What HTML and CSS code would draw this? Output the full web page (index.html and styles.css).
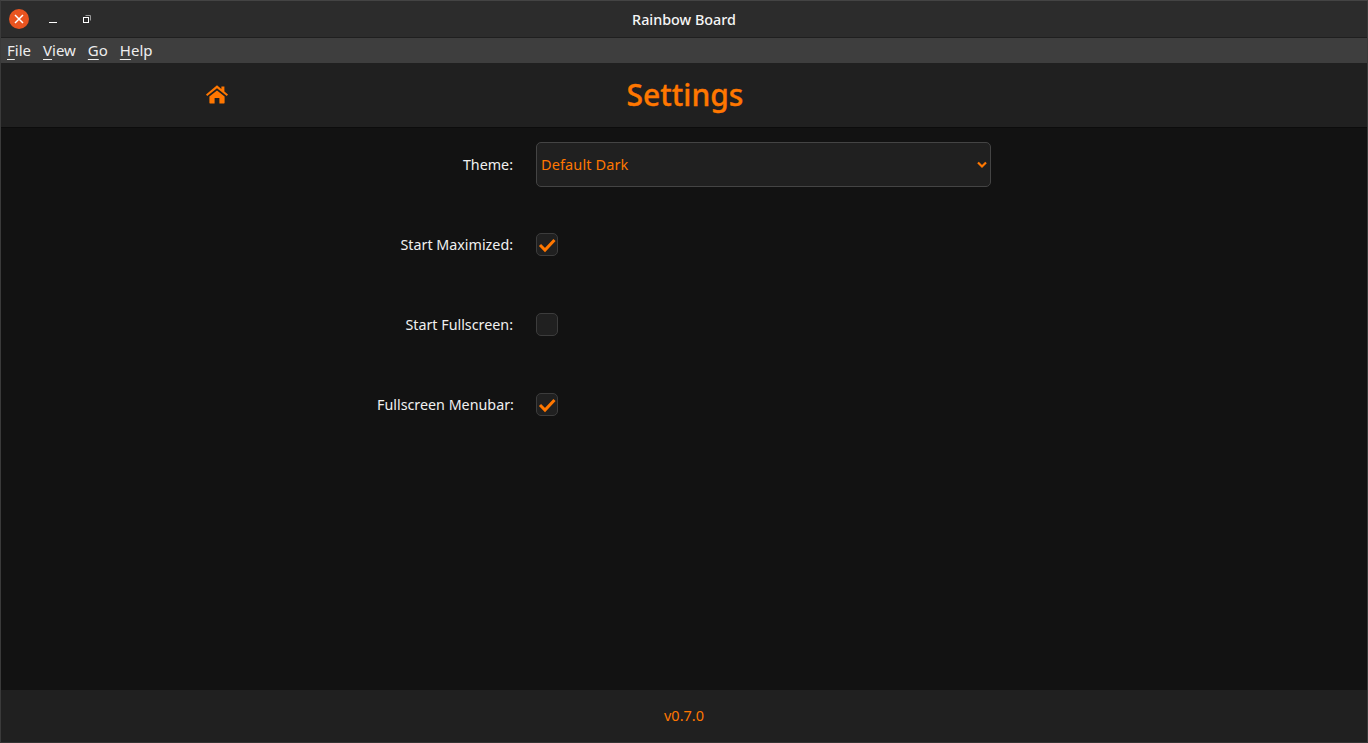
FILE: index.html
```html
<!DOCTYPE html>
<html lang="en">
<head>
<meta charset="utf-8">
<title>Rainbow Board</title>
<link rel="stylesheet" href="styles.css">
</head>
<body>
<div class="window">
  <div class="titlebar">
    <div class="controls">
      <span class="close"><svg width="20" height="20" viewBox="0 0 20 20"><path d="M6 6l8 8M14 6l-8 8" stroke="#fff" stroke-width="1.5" fill="none"/></svg></span>
      <span class="min"><svg width="10" height="10" viewBox="0 0 10 10"><path d="M1 8.5h8" stroke="#fff" fill="none"/></svg></span>
      <span class="max"><svg width="10" height="10" viewBox="0 0 10 10"><rect x="1.5" y="3.5" width="5" height="5" stroke="#fff" fill="none"/><path d="M3.5 1.5h5v5" stroke="#999" fill="none"/></svg></span>
    </div>
    <div class="title">Rainbow Board</div>
  </div>
  <nav class="menubar">
    <span class="menu-item"><u>F</u>ile</span>
    <span class="menu-item"><u>V</u>iew</span>
    <span class="menu-item"><u>G</u>o</span>
    <span class="menu-item"><u>H</u>elp</span>
  </nav>
  <header class="header">
    <div class="home-slot">
      <svg class="home" width="24" height="20" viewBox="0 0 24 20"><path fill="#ff7700" d="M12 1.2l4.4 3.7V2.4h3v5l3.6 3-1.2 1.5L12 4.3 2.2 11.9 1 10.4zM4.4 12.4L12 6.5l7.6 5.9v6.4a.6.6 0 0 1-.6.6h-4.6v-5.3H9.6v5.3H5a.6.6 0 0 1-.6-.6z"/></svg>
    </div>
    <h1 class="heading">Settings</h1>
    <div class="home-slot"></div>
  </header>
  <main class="content">
    <div class="form">
      <label class="label">Theme:</label>
      <div class="select">
        <span>Default Dark</span>
        <svg width="12" height="8" viewBox="0 0 12 8"><path d="M2 1.5L6 5.5l4-4" stroke="#ff7700" stroke-width="2.2" fill="none"/></svg>
      </div>
      <label class="label">Start Maximized:</label>
      <div class="cell"><span class="check"><svg width="18" height="16" viewBox="0 0 18 16"><path d="M2 8L7 13 16.5 3" stroke="#ff7700" stroke-width="3" fill="none"/></svg></span></div>
      <label class="label">Start Fullscreen:</label>
      <div class="cell"><span class="check"></span></div>
      <label class="label">Fullscreen Menubar:</label>
      <div class="cell"><span class="check"><svg width="18" height="16" viewBox="0 0 18 16"><path d="M2 8L7 13 16.5 3" stroke="#ff7700" stroke-width="3" fill="none"/></svg></span></div>
    </div>
  </main>
  <footer class="footer">v0.7.0</footer>
</div>
</body>
</html>
```

FILE: styles.css
```css
* { box-sizing: border-box; }
html, body { margin: 0; height: 100%; }
body { background: #121212; font-family: "Noto Sans", "Open Sans", sans-serif; color: #eee; overflow: hidden; }
.window { height: 743px; display: flex; flex-direction: column; border: 1px solid #3a3a3a; border-top-color: #444; border-bottom-color: #333; background: #121212; }
.titlebar { height: 37px; background: #2c2c2c; border-bottom: 1px solid #1f1f1f; position: relative; display: flex; align-items: center; justify-content: center; flex: none; }
.controls { position: absolute; left: 8px; top: 8px; display: flex; align-items: center; }
.close { width: 20px; height: 20px; border-radius: 50%; background: #e95420; display: block; }
.close svg, .min svg, .max svg { display: block; }
.min { margin-left: 19px; }
.max { margin-left: 24px; }
.title { font-size: 14.35px; font-weight: 500; color: #f6f6f6; }
.menubar { height: 25px; background: #3e3e3e; display: flex; align-items: center; padding: 0 0 2px 6px; gap: 12px; font-size: 15px; color: #eee; flex: none; }
.menu-item u { text-underline-offset: 3px; }
.header { height: 65px; background: #202020; border-bottom: 1px solid #0c0c0c; display: grid; grid-template-columns: 1fr auto 1fr; align-items: center; flex: none; }
.home-slot { display: flex; padding-left: 204px; }
.home { display: block; margin-top: -3px; }
.heading { margin: 0; padding-left: 2px; font-size: 30px; line-height: 40px; font-weight: 500; -webkit-text-stroke: .35px #ff7700; color: #ff7700; }
.content { flex: 1; min-height: 0; padding-top: 14px; }
.form { display: grid; grid-template-columns: 136px 455px; column-gap: 23px; row-gap: 35px; justify-content: center; align-items: center; }
.label { font-size: 14.3px; color: #f0f0f0; text-align: right; line-height: 23px; height: 23px; white-space: nowrap; }
.select { height: 45px; background: #202020; border: 1px solid #444; border-radius: 5px; display: flex; align-items: center; justify-content: space-between; padding: 0 2px 2px 4px; color: #ff7700; font-size: 14.5px; letter-spacing: .12px; }
.select svg { margin-top: 2px; }
.cell { height: 45px; display: flex; align-items: center; }
.check { width: 22px; height: 23px; background: #202020; border: 1px solid #3c3c3c; border-radius: 5px; display: flex; align-items: center; justify-content: center; }
.check svg { display: block; }
.footer { height: 52px; background: #202020; color: #ff7700; font-size: 14.5px; padding-bottom: 2px; display: flex; align-items: center; justify-content: center; flex: none; }
```
